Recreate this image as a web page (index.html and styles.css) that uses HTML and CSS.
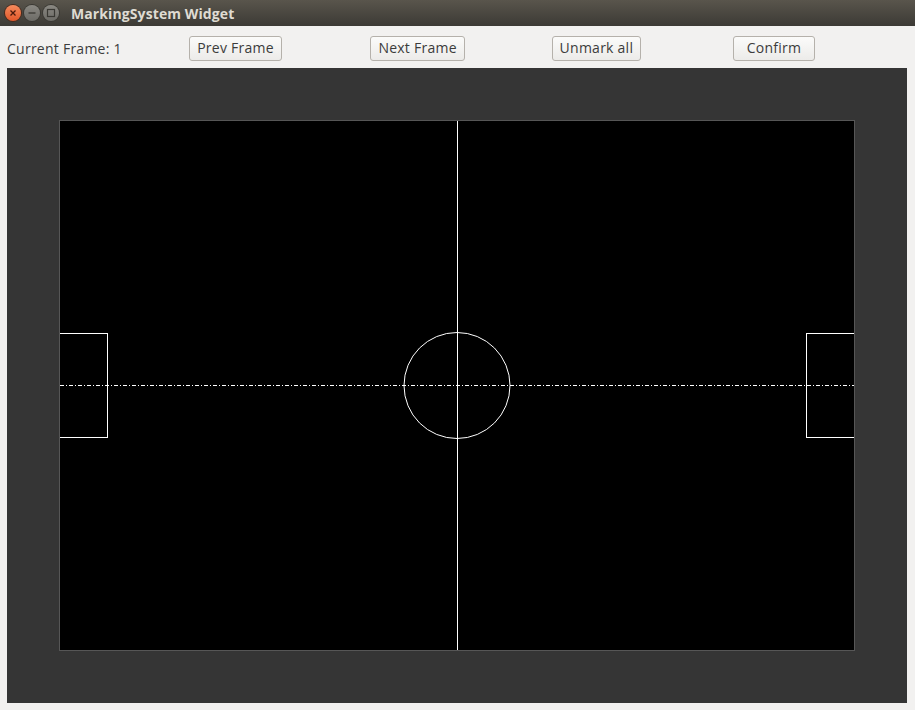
FILE: index.html
```html
<!DOCTYPE html>
<html>
<head>
<meta charset="utf-8">
<link rel="stylesheet" href="styles.css">
<title>MarkingSystem Widget</title>
</head>
<body>
<div class="window">
  <div class="titlebar">
    <div class="wbtns">
      <span class="wbtn close"><svg width="16" height="16" viewBox="0 0 16 16"><path d="M5.5 5.5 L10.5 10.5 M10.5 5.5 L5.5 10.5" stroke="#4a1a0c" stroke-width="1.3" fill="none"/></svg></span>
      <span class="wbtn"><svg width="16" height="16" viewBox="0 0 16 16"><path d="M4.5 8 H11.5" stroke="#3a3934" stroke-width="1.3" fill="none"/></svg></span>
      <span class="wbtn"><svg width="16" height="16" viewBox="0 0 16 16"><rect x="4.5" y="4.5" width="7" height="7" stroke="#3a3934" stroke-width="1.2" fill="none"/></svg></span>
    </div>
    <div class="title">MarkingSystem Widget</div>
  </div>
  <div class="toolbar">
    <div class="label">Current Frame: 1</div>
    <div class="cell"><button class="btn">Prev Frame</button></div>
    <div class="cell"><button class="btn">Next Frame</button></div>
    <div class="cell"><button class="btn">Unmark all</button></div>
    <div class="cell"><button class="btn btn-confirm">Confirm</button></div>
  </div>
  <div class="canvas">
    <div class="field">
      <svg width="794" height="529" viewBox="0 0 794 529">
        <line x1="397.5" y1="0" x2="397.5" y2="529" stroke="#fff" stroke-width="1"/>
        <line x1="0" y1="264.5" x2="794" y2="264.5" stroke="#fff" stroke-width="1" stroke-dasharray="4 2 1 2"/>
        <circle cx="397" cy="264.5" r="53" stroke="#fff" stroke-width="1" fill="none"/>
        <rect x="-1" y="212.5" width="48.5" height="104" stroke="#fff" stroke-width="1" fill="none"/>
        <rect x="746.5" y="212.5" width="49" height="104" stroke="#fff" stroke-width="1" fill="none"/>
      </svg>
    </div>
  </div>
</div>
</body>
</html>
```
FILE: styles.css
```css
html, body {
  margin: 0;
  padding: 0;
}
body {
  width: 915px;
  height: 710px;
  background: #f2f1f0;
  font-family: "Open Sans", "DejaVu Sans", sans-serif;
  overflow: hidden;
}
.window {
  display: flex;
  flex-direction: column;
  width: 915px;
  height: 710px;
}
.titlebar {
  height: 26px;
  background: linear-gradient(#59554c, #3c3a35);
  display: flex;
  align-items: center;
  flex: none;
}
.wbtns {
  display: flex;
  gap: 3px;
  padding-left: 5px;
}
.wbtn {
  width: 16px;
  height: 16px;
  border-radius: 50%;
  background: linear-gradient(#8a8882, #6c6b66);
  box-shadow: 0 0 0 1px #3a3934;
  display: block;
}
.wbtn svg { display: block; }
.wbtn.close {
  background: linear-gradient(#f58a5c, #e2582a);
  box-shadow: 0 0 0 1px #4a2a1c;
}
.title {
  margin-left: 12px;
  color: #dfdbd2;
  font-weight: bold;
  font-size: 14px;
  letter-spacing: 0.1px;
}
.toolbar {
  height: 42px;
  flex: none;
  display: grid;
  grid-template-columns: repeat(5, 1fr);
  column-gap: 6px;
  padding: 0 8px 0 7px;
  align-items: center;
  box-sizing: border-box;
}
.label {
  font-size: 14px;
  letter-spacing: 0.25px;
  color: #3c3c3c;
  padding-top: 3px;
}
.cell {
  display: flex;
  justify-content: flex-start;
  padding-top: 2px;
}
.btn {
  font-family: "Open Sans", "DejaVu Sans", sans-serif;
  font-size: 14px;
  letter-spacing: 0.25px;
  color: #3c3c3c;
  height: 25px;
  padding: 0 7px;
  margin-left: 1px;
  border: 1px solid #b5b1ab;
  border-radius: 3px;
  background: linear-gradient(#fbfbfa, #ecebe9);
  line-height: 22px;
}
.btn-confirm {
  padding: 0 13px;
}
.canvas {
  margin: 0 8px 7px 7px;
  flex: 1;
  background: #353535;
  display: flex;
  justify-content: center;
  align-items: flex-start;
  padding-top: 52px;
}
.field {
  border: 1px solid #565656;
  background: #000;
  width: 794px;
  height: 529px;
}
.field svg { display: block; }
```
